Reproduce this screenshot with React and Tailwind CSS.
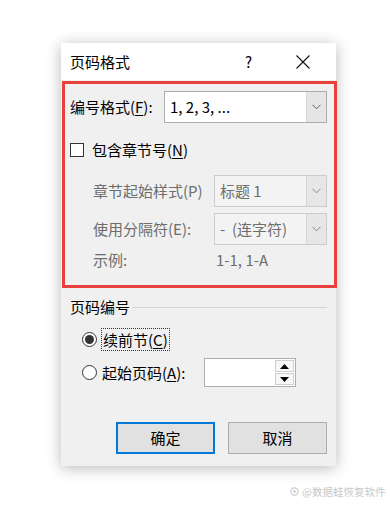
import React from "react";

const font = { fontFamily: '"Noto Sans CJK SC", "Microsoft YaHei", "Noto Sans", sans-serif' };

function Chevron({ color = "#606060" }) {
  return (
    <svg width="9" height="6" viewBox="0 0 9 6">
      <path d="M0.5 0.8 L4.5 4.8 L8.5 0.8" fill="none" stroke={color} strokeWidth="1" />
    </svg>
  );
}

function Select({ text, disabled, width }) {
  return (
    <div
      className={`flex h-[32px] border ${disabled ? "border-[#cccccc] bg-[#f3f3f3]" : "border-[#adadad] bg-white"}`}
      style={{ width }}
    >
      <div className={`flex flex-1 items-center pl-[5px] text-[15px] leading-[20px] ${disabled ? "text-[#6d6d6d]" : "text-black"}`}>{text}</div>
      <div className={`flex w-[20px] items-center justify-center border-l ${disabled ? "border-[#d6d6d6] bg-[#e6e6e6]" : "border-[#d9d9d9] bg-[#e5e5e5]"}`}>
        <Chevron color={disabled ? "#8a8a8a" : "#606060"} />
      </div>
    </div>
  );
}

export default function App() {
  return (
    <div className="relative h-[507px] w-[390px] overflow-hidden bg-white" style={font}>
      <div className="ml-[61px] mt-[43px] flex h-[423px] w-[275px] flex-col bg-[#f0f0f0] shadow-[0_2px_14px_rgba(0,0,0,0.28)]">
        {/* title bar */}
        <div className="flex h-[37px] items-center bg-white">
          <div className="ml-[9px] text-[15px] leading-[20px] text-black">页码格式</div>
          <div className="ml-[115px] text-[15px] leading-[20px] text-black">?</div>
          <div className="ml-[44px] flex h-[14px] w-[14px] items-center justify-center">
            <svg width="14" height="14" viewBox="0 0 14 14">
              <path d="M0.5 0.5 L13.5 13.5 M13.5 0.5 L0.5 13.5" stroke="#111" strokeWidth="1.1" />
            </svg>
          </div>
        </div>
        {/* red annotated box */}
        <div className="ml-[1px] mt-[1px] h-[207px] w-[275px] border-[3px] border-[#e8403c]">
          <div className="ml-[5px] mt-[7px] flex items-center">
            <div className="w-[94px] text-[15px] leading-[20px] text-black">
              编号格式(<span className="underline underline-offset-2">F</span>):
            </div>
            <Select text="1, 2, 3, ..." width={163} />
          </div>
          <div className="ml-[5px] mt-[20px] flex h-[14px] items-center">
            <div className="h-[14px] w-[14px] border border-[#333] bg-white" />
            <div className="ml-[8px] text-[15px] leading-[20px] text-black">
              包含章节号(<span className="underline underline-offset-2">N</span>)
            </div>
          </div>
          <div className="ml-[28px] mt-[18px] flex items-center">
            <div className="w-[121px] text-[15px] leading-[20px] text-[#6d6d6d]">章节起始样式(P)</div>
            <Select text="标题 1" disabled width={113} />
          </div>
          <div className="ml-[28px] mt-[6px] flex items-center">
            <div className="w-[121px] text-[15px] leading-[20px] text-[#6d6d6d]">使用分隔符(E):</div>
            <Select text={<span>-&nbsp;&nbsp;(连字符)</span>} disabled width={113} />
          </div>
          <div className="ml-[28px] mt-[5px] flex h-[20px] items-center">
            <div className="w-[123px] text-[15px] leading-[20px] text-[#6d6d6d]">示例:</div>
            <div className="text-[15px] leading-[20px] text-[#6d6d6d]">1-1, 1-A</div>
          </div>
        </div>
        {/* page numbering */}
        <div className="ml-[9px] mt-[9px] flex h-[20px] w-[257px] items-center">
          <div className="text-[15px] leading-[20px] text-black">页码编号</div>
          <div className="ml-[2px] h-px flex-1 bg-[#d5d5d5]" />
        </div>
        <div className="ml-[21px] mt-[11px] flex h-[23px] items-center">
          <div className="flex h-[15px] w-[15px] items-center justify-center rounded-full border border-[#333] bg-white">
            <div className="h-[9px] w-[9px] rounded-full bg-[#333]" />
          </div>
          <div className="ml-[4px] flex h-[23px] items-center border border-dotted border-[#333] px-[1px] text-[15px] leading-[20px] text-black">
            续前节(<span className="underline underline-offset-2">C</span>)
          </div>
        </div>
        <div className="ml-[21px] mt-[7px] flex h-[29px] items-center">
          <div className="h-[15px] w-[15px] rounded-full border border-[#333] bg-white" />
          <div className="ml-[5px] w-[102px] text-[15px] leading-[20px] text-black">
            起始页码(<span className="underline underline-offset-2">A</span>):
          </div>
          <div className="flex h-[29px] w-[92px] border border-[#adadad] bg-white">
            <div className="flex-1" />
            <div className="my-[1px] mr-[1px] flex w-[19px] flex-col gap-[1px]">
              <div className="flex flex-1 items-center justify-center border border-[#cfcfcf] bg-[#f7f7f7]">
                <svg width="9" height="5" viewBox="0 0 9 5"><path d="M0 5 L4.5 0 L9 5 Z" fill="#000" /></svg>
              </div>
              <div className="flex flex-1 items-center justify-center border border-[#cfcfcf] bg-[#f7f7f7]">
                <svg width="9" height="5" viewBox="0 0 9 5"><path d="M0 0 L4.5 5 L9 0 Z" fill="#000" /></svg>
              </div>
            </div>
          </div>
        </div>
        {/* buttons */}
        <div className="ml-[55px] mt-[35px] flex gap-[13px]">
          <div className="flex h-[32px] w-[99px] items-center justify-center border-2 border-[#0078d7] bg-[#e1e1e1] text-[15px] leading-[20px] text-black">
            确定
          </div>
          <div className="flex h-[32px] w-[99px] items-center justify-center border border-[#adadad] bg-[#e1e1e1] text-[15px] leading-[20px] text-black">
            取消
          </div>
        </div>
      </div>
      {/* watermark */}
      <div className="absolute left-[290px] top-[484px] flex items-center gap-[3px] text-[10.5px] text-[#c8c8c8]">
        <svg width="9" height="9" viewBox="0 0 10 10">
          <circle cx="5" cy="5" r="4" fill="none" stroke="#c8c8c8" strokeWidth="1.2" />
          <circle cx="5" cy="5" r="1.5" fill="#c8c8c8" />
        </svg>
        <span>@数据蛙恢复软件</span>
      </div>
    </div>
  );
}
